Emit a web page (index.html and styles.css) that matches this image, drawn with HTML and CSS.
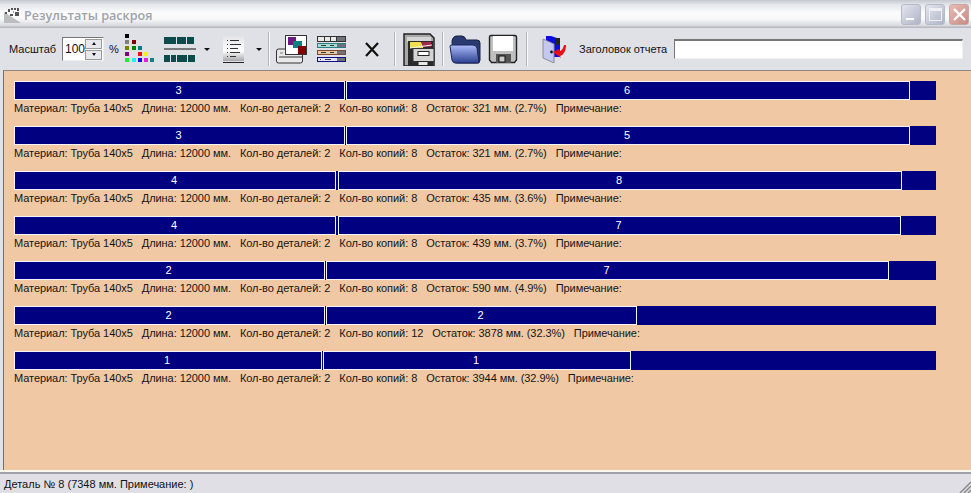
FILE: index.html
```html
<!DOCTYPE html>
<html lang="ru">
<head>
<meta charset="utf-8">
<title>Результаты раскроя</title>
<link rel="stylesheet" href="styles.css">
</head>
<body>
<div class="window">
  <header class="titlebar">
    <svg class="app-icon" width="17" height="17" viewBox="0 0 17 17"><path d="M0 6 L17 17 H0Z" fill="#bdbdbd"/><path d="M1 6h2v2H1zM4 3h2v3H4zM7 2h2v2H7zM10 2h2v2h-2zM13 2h2v3h-2zM6 8h3v2H6zM11 6h4v4h-4z" fill="#555"/><path d="M9 5h1v2H9z" fill="#999"/></svg>
    <span class="title">Результаты раскроя</span>
    <div class="caption-buttons">
      <div class="cap cap-min"><i class="min-glyph"></i></div>
      <div class="cap cap-max"><i class="max-glyph"></i></div>
      <div class="cap cap-close"><svg width="15" height="15" viewBox="0 0 15 15"><path d="M2 2l11 11M13 2L2 13" stroke="#fff" stroke-width="2.4"/></svg></div>
    </div>
  </header>
  <div class="toolbar">
    <span class="scale-label">Масштаб</span>
    <div class="spin">
      <span class="spin-value">100</span>
      <div class="spin-btns">
        <div class="spin-btn"><i class="tri-up"></i></div>
        <div class="spin-btn"><i class="tri-down"></i></div>
      </div>
    </div>
    <span class="percent">%</span>
    <svg class="ic-palette" width="31" height="30" viewBox="0 0 31 30">
      <rect x="1" y="0" width="4" height="4" fill="#000"/>
      <rect x="1" y="6" width="4" height="4" fill="#808080"/><rect x="8" y="6" width="4" height="4" fill="#800000"/>
      <rect x="1" y="12" width="4" height="4" fill="#808000"/><rect x="8" y="12" width="4" height="4" fill="#008000"/><rect x="14" y="12" width="4" height="4" fill="#008080"/>
      <rect x="1" y="18" width="4" height="4" fill="#800080"/><rect x="14" y="18" width="4" height="4" fill="#f01010"/><rect x="20" y="18" width="4" height="4" fill="#f0f020"/>
      <rect x="1" y="24" width="4" height="4" fill="#20f020"/><rect x="8" y="24" width="4" height="4" fill="#20f0f0"/><rect x="14" y="24" width="4" height="4" fill="#1010e0"/><rect x="20" y="24" width="4" height="4" fill="#e020e0"/><rect x="26" y="24" width="4" height="4" fill="#108080"/>
    </svg>
    <svg class="ic-layout" width="32" height="25" viewBox="0 0 32 25">
      <path d="M0 0h12v7H0zM13 0h9v7h-9zM23 0h7v7h-7zM0 18h6v7H0zM7 18h5v7H7zM13 18h10v7H13zM24 18h7v7h-7z" fill="#0c4a4c"/>
      <path d="M0 12h32" stroke="#111" stroke-width="1"/>
    </svg>
    <i class="drop drop-a"></i>
    <svg class="ic-doc" width="21" height="27" viewBox="0 0 21 27">
      <defs><linearGradient id="pg" x1="0" y1="0" x2="0" y2="1"><stop offset="0" stop-color="#e4e4e8"/><stop offset=".6" stop-color="#fff"/><stop offset="1" stop-color="#a8a8ac"/></linearGradient></defs>
      <rect x="0" y="0" width="21" height="25" fill="url(#pg)"/>
      <path d="M4 4.500h1M7 4.500h9M4 8.500h1M7 8.500h11M4 12.500h1M7 12.500h8M4 16.500h1M7 16.500h10M4 20.500h1M7 20.500h6" stroke="#333" stroke-width="1"/>
      <path d="M0 26.500h21" stroke="#222"/>
    </svg>
    <i class="drop drop-b"></i>
    <i class="sep sep-a"></i>
    <svg class="ic-print" width="32" height="29" viewBox="0 0 32 29">
      <path d="M0.500 16q0-2 2-2h24v12q0 2-2 2h-22q-2 0-2-2z" fill="#e8e8e8" stroke="#333"/>
      <path d="M3 22h24" stroke="#333"/><path d="M4 18h3" stroke="#777"/>
      <rect x="9.500" y="0.500" width="21" height="19" fill="#fff" stroke="#333"/>
      <rect x="12" y="2" width="8" height="8" fill="#6a1a80"/>
      <rect x="17" y="6" width="9" height="7" fill="#0a7f80"/>
      <rect x="22" y="11" width="8" height="8" fill="#800000"/>
    </svg>
    <svg class="ic-grid" width="29" height="26" viewBox="0 0 29 26">
      <rect x="0.500" y="0.500" width="28" height="5" fill="#e8e8e8" stroke="#333"/>
      <rect x="0.500" y="7.500" width="28" height="4" fill="#a8dcd8" stroke="#2a8080"/>
      <rect x="0.500" y="14.500" width="28" height="4" fill="#e8c8a0" stroke="#7a4a30"/>
      <rect x="0.500" y="21.500" width="28" height="4" fill="#e4e4ff" stroke="#101080"/>
      <path d="M7.500 1v4M13.500 1v4M19.500 1v4" stroke="#333"/>
      <path d="M4 9.500h5M13 9.500h4M4 16.500h5M13 16.500h4M3 23.500h1M8 23.500h6" stroke="#333"/>
      <path d="M20 1h8v4h-8zM20 8h8v3h-8zM20 15h8v3h-8zM20 22h8v3h-8z" fill="#707078"/>
    </svg>
    <svg class="ic-x" width="16" height="15" viewBox="0 0 16 15"><path d="M2 1l12 13M14 1L2 14" stroke="#111" stroke-width="2.200"/></svg>
    <i class="sep sep-b"></i>
    <svg class="ic-cabinet" width="32" height="33" viewBox="0 0 32 33">
      <path d="M1 33V1h26l4 4v28z" fill="#a8a8a8" stroke="#222" stroke-width="1.500"/>
      <rect x="4" y="4" width="24" height="5" fill="#d4d4d4"/>
      <rect x="5" y="8" width="25" height="25" fill="#2a2a2a"/>
      <path d="M7 9h11l2 3v3H7z" fill="#f0e050"/><path d="M18 9h10v5H20z" fill="#a02848"/>
      <path d="M7 15l22-3" stroke="#f0f0f0"/>
      <rect x="10" y="15.500" width="21" height="13" fill="#d4d4d4" stroke="#333"/>
      <rect x="15" y="18.500" width="11" height="4" fill="#fff" stroke="#222"/>
      <rect x="15" y="28.500" width="10" height="4" fill="#e8e8e8" stroke="#222"/>
    </svg>
    <i class="sep sep-c"></i>
    <svg class="ic-folder" width="32" height="30" viewBox="0 0 32 30">
      <defs><linearGradient id="fd" x1="0" y1="0" x2="0" y2="1"><stop offset="0" stop-color="#aebcfa"/><stop offset="1" stop-color="#2c3f90"/></linearGradient></defs>
      <path d="M3 7q1-5 5-5h5q3 0 4 4h11q3 0 3 3v17q0 3-3 3H8q-3 0-4-3z" fill="#2a3a70" stroke="#161e48"/>
      <path d="M1 12q0-1 2-1h21q3 0 4 3l2 15H6q-2 0-3-3z" fill="url(#fd)" stroke="#1a2558"/>
    </svg>
    <svg class="ic-floppy" width="30" height="30" viewBox="0 0 30 30">
      <path d="M1.500 3q0-1.500 1.500-1.500h24q1.500 0 1.500 1.500v23l-2 2.500h-23l-2-2.500z" fill="#c0c0c0" stroke="#222" stroke-width="1.400"/>
      <rect x="5" y="2" width="20" height="15" fill="#fff"/>
      <rect x="8" y="20" width="15" height="9" fill="#555"/>
      <rect x="11" y="22" width="6" height="6" fill="#ccc" stroke="#111"/>
    </svg>
    <i class="sep sep-d"></i>
    <svg class="ic-door" width="26" height="28" viewBox="0 0 26 28">
      <path d="M5 1h5l9 3v18H5z" fill="#0c0ce0"/><path d="M15 3h4v7h-4z" fill="#222"/>
      <path d="M2 4l11 5v19L2 23z" fill="#c4c8f0" stroke="#8c8c8c"/>
      <circle cx="10.500" cy="17" r="1.400" fill="#111"/>
      <path d="M12 17l6-3 1 2q3-1 4-6h2q0 9-6 11l1 2z" fill="#e80f18"/>
    </svg>
    <span class="report-label">Заголовок отчета</span>
    <div class="report-input"></div>
  </div>
  <main class="canvas">
    <section class="row">
      <div class="bar"><div class="seg" style="width:331px">3</div><div class="seg" style="width:564px">6</div></div>
      <p class="info"><span>Материал: Труба 140х5</span><span>Длина: 12000 мм.</span><span>Кол-во деталей: 2</span><span>Кол-во копий: 8</span><span>Остаток: 321 мм. (2.7%)</span><span>Примечание:</span></p>
    </section>
    <section class="row">
      <div class="bar"><div class="seg" style="width:331px">3</div><div class="seg" style="width:564px">5</div></div>
      <p class="info"><span>Материал: Труба 140х5</span><span>Длина: 12000 мм.</span><span>Кол-во деталей: 2</span><span>Кол-во копий: 8</span><span>Остаток: 321 мм. (2.7%)</span><span>Примечание:</span></p>
    </section>
    <section class="row">
      <div class="bar"><div class="seg" style="width:322px">4</div><div class="seg seg-gap" style="width:564px">8</div></div>
      <p class="info"><span>Материал: Труба 140х5</span><span>Длина: 12000 мм.</span><span>Кол-во деталей: 2</span><span>Кол-во копий: 8</span><span>Остаток: 435 мм. (3.6%)</span><span>Примечание:</span></p>
    </section>
    <section class="row">
      <div class="bar"><div class="seg" style="width:322px">4</div><div class="seg seg-gap" style="width:563px">7</div></div>
      <p class="info"><span>Материал: Труба 140х5</span><span>Длина: 12000 мм.</span><span>Кол-во деталей: 2</span><span>Кол-во копий: 8</span><span>Остаток: 439 мм. (3.7%)</span><span>Примечание:</span></p>
    </section>
    <section class="row">
      <div class="bar"><div class="seg" style="width:311px">2</div><div class="seg" style="width:563px">7</div></div>
      <p class="info"><span>Материал: Труба 140х5</span><span>Длина: 12000 мм.</span><span>Кол-во деталей: 2</span><span>Кол-во копий: 8</span><span>Остаток: 590 мм. (4.9%)</span><span>Примечание:</span></p>
    </section>
    <section class="row">
      <div class="bar"><div class="seg" style="width:311px">2</div><div class="seg" style="width:311px">2</div></div>
      <p class="info"><span>Материал: Труба 140х5</span><span>Длина: 12000 мм.</span><span>Кол-во деталей: 2</span><span>Кол-во копий: 12</span><span>Остаток: 3878 мм. (32.3%)</span><span>Примечание:</span></p>
    </section>
    <section class="row">
      <div class="bar"><div class="seg" style="width:308px">1</div><div class="seg" style="width:308px">1</div></div>
      <p class="info"><span>Материал: Труба 140х5</span><span>Длина: 12000 мм.</span><span>Кол-во деталей: 2</span><span>Кол-во копий: 8</span><span>Остаток: 3944 мм. (32.9%)</span><span>Примечание:</span></p>
    </section>
  </main>
  <footer class="statusbar">
    <span>Деталь № 8 (7348 мм. Примечание: )</span>
    <svg class="grip" width="12" height="12" viewBox="0 0 12 12"><path d="M12 1L1 12M12 5L5 12M12 9L9 12" stroke="#8c8c8c" stroke-width="1.500"/></svg>
  </footer>
</div>
</body>
</html>
```
FILE: styles.css
```css
* { box-sizing: border-box; }
html, body { margin: 0; height: 100%; overflow: hidden; }
body { font-family: "Liberation Sans", Arial, sans-serif; font-size: 11px; color: #111; background: #e0e1e6; }
.window { width: 971px; height: 493px; display: flex; flex-direction: column; }

.titlebar {
  height: 28px; flex: none; display: flex; align-items: center; padding: 0 2px 0 4px;
  background: linear-gradient(#c4c7ce 0, #e6e8ec 5px, #fbfbfc 13px, #f8f8f9 19px, #d6d8de 26px, #b8b9bf 27px);
}
.app-icon { flex: none; }
.title { margin: 2px 0 0 3px; font-family: "Open Sans", sans-serif; font-size: 12.600px; font-weight: 600; color: #a0a3ab; }
.caption-buttons { margin-left: auto; display: flex; gap: 4px; }
.cap { width: 20px; height: 21px; border-radius: 3px; border: 1px solid #b4bac8; display: flex; align-items: center; justify-content: center; background: linear-gradient(135deg, #e4e6ee, #aeb4c6); }
.cap-close { background: linear-gradient(135deg, #e8bcb4, #c98a84); border-color: #c8a8a4; }
.min-glyph { width: 8px; height: 2px; background: #fff; margin-top: 9px; margin-right: 3px; }
.max-glyph { width: 13px; height: 13px; border: 1px solid #f0f0f4; border-top-width: 3px; }

.toolbar { height: 42px; flex: none; display: flex; align-items: center; padding-left: 9px; background: #e0e1e6; }
.toolbar > * { flex: none; }
.scale-label { width: 53px; }
.spin { width: 42px; height: 24px; background: #fff; border: 1px solid; border-color: #777 #eee #eee #777; display: flex; align-items: center; padding: 0 1px 0 2px; justify-content: space-between; }
.spin-value { font-size: 12px; }
.spin-btns { width: 17px; display: flex; flex-direction: column; gap: 1px; }
.spin-btn { height: 10px; background: #e8e8ec; border: 1px solid #999; display: flex; align-items: center; justify-content: center; }
.tri-up { border: 2px solid transparent; border-top: 0; border-bottom: 3px solid #111; }
.tri-down { border: 2px solid transparent; border-bottom: 0; border-top: 3px solid #111; }
.percent { margin-left: 5px; width: 8px; }
.ic-palette { margin-left: 7px; }
.ic-layout { margin-left: 9px; }
.drop { width: 0; height: 0; border: 3px solid transparent; border-bottom: 0; border-top: 3px solid #111; }
.drop-a { margin-left: 8px; }
.ic-doc { margin-left: 13px; }
.drop-b { margin-left: 12px; }
.sep { width: 2px; height: 34px; background: linear-gradient(90deg, #b4b5ba 50%, #fafafa 50%); }
.sep-a { margin-left: 6px; }
.ic-print { margin-left: 6px; }
.ic-grid { margin-left: 9px; }
.ic-x { margin-left: 18px; }
.sep-b { margin-left: 14px; }
.ic-cabinet { margin-left: 7px; }
.sep-c { margin-left: 7px; }
.ic-folder { margin-left: 5px; }
.ic-floppy { margin-left: 7px; }
.sep-d { margin-left: 8px; }
.ic-door { margin-left: 13px; }
.report-label { margin-left: 12px; width: 95px; }
.report-input { width: 289px; height: 20px; background: #fff; border: 1px solid; border-color: #777 #eee #eee #777; border-top-width: 2px; }

.canvas { flex: 1; min-height: 0; margin-left: 3px; padding: 10px 0 0 11px; background: #f0c8a4; border-left: 1px solid #77726c; border-top: 1px solid #8b8680; display: flex; flex-direction: column; gap: 6px; }
.row { width: 922px; height: 39px; margin-left: -1px; }
.bar { height: 19px; background: #000080; display: flex; }
.seg { height: 19px; border: 1px solid #f4f4f8; color: #fff; background: #000080; text-align: center; line-height: 17px; font-size: 11px; margin-right: 1px; padding-right: 2px; }
.seg-gap { margin-left: 1px; }
.info { margin: 0; height: 20px; line-height: 16px; font-size: 11px; letter-spacing: -0.06px; white-space: pre; color: #151515; display: flex; gap: 9px; }

.statusbar { height: 21px; flex: none; display: flex; align-items: center; justify-content: space-between; padding: 1px 0 0 4px; border-top: 2px solid #a0a0a8; background: #dfdfe5; box-shadow: 0 -2px 0 #fff8ee; font-size: 11px; }
.grip { align-self: flex-end; }
```
